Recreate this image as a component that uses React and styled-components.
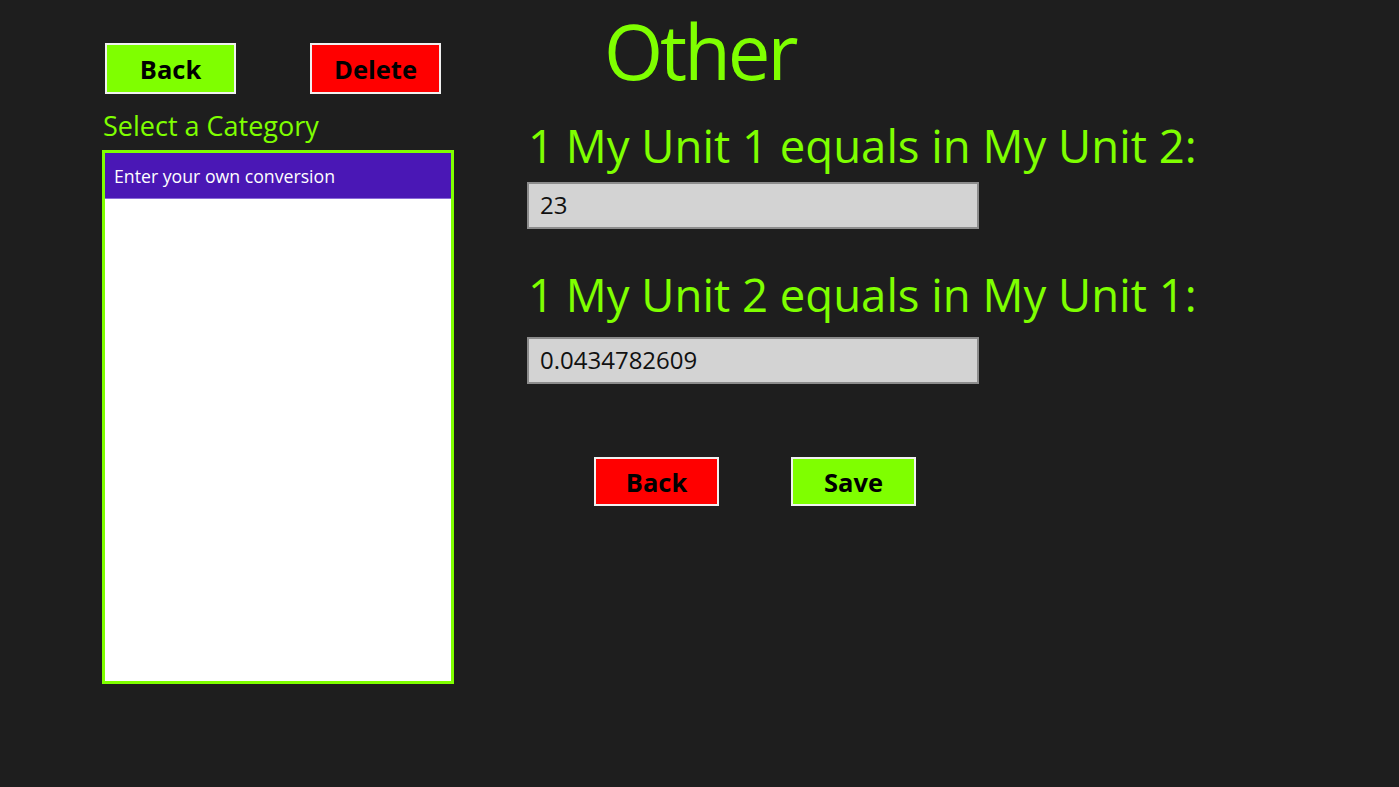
import styled, { createGlobalStyle } from 'styled-components'

const GlobalStyle = createGlobalStyle`
  html, body {
    margin: 0;
    padding: 0;
    background: #1e1e1e;
  }
  body {
    font-family: "Open Sans", "Noto Sans", sans-serif;
  }
`

const Page = styled.div`
  width: 1399px;
  height: 787px;
  background: #1e1e1e;
  display: flex;
  overflow: hidden;
`

const LeftColumn = styled.div`
  width: 352px;
  margin-left: 102px;
  padding-top: 43px;
  display: flex;
  flex-direction: column;
`

const TopButtons = styled.div`
  display: flex;
  gap: 74px;
  padding-left: 3px;
`

const ActionButton = styled.button`
  width: ${p => p.$w || 131}px;
  height: ${p => p.$h || 51}px;
  background: ${p => (p.$danger ? '#ff0000' : '#7fff00')};
  border: 2px solid #f0f0f0;
  color: #000;
  font-family: "Open Sans", sans-serif;
  font-weight: 700;
  font-size: 25.5px;
  line-height: 1;
  padding: 2px 0 0;
  cursor: pointer;
`

const Label = styled.div`
  margin-top: 18px;
  padding-left: 1px;
  color: #7fff00;
  font-size: 27px;
  line-height: 28px;
`

const CategoryList = styled.div`
  margin-top: 10px;
  height: 534px;
  box-sizing: border-box;
  border: 3px solid #7fff00;
  background: #fff;
`

const CategoryItem = styled.div`
  height: 46px;
  box-sizing: border-box;
  padding-left: 9px;
  display: flex;
  align-items: center;
  background: ${p => (p.$selected ? '#4a17b5' : 'transparent')};
  color: ${p => (p.$selected ? '#fff' : '#000')};
  font-size: 17.7px;
  border-bottom: 1px solid #8a6ad8;
`

const RightColumn = styled.div`
  margin-left: 73px;
  padding-top: 8px;
  display: flex;
  flex-direction: column;
`

const Title = styled.h1`
  margin: 0;
  padding-left: 77px;
  color: #7fff00;
  font-weight: 400;
  font-size: 76px;
  line-height: 86px;
  letter-spacing: -3px;
`

const Heading = styled.div`
  margin-top: ${p => p.$top}px;
  padding-left: 1px;
  color: #7fff00;
  font-size: 45.5px;
  line-height: 46px;
  white-space: nowrap;
`

const ValueInput = styled.input`
  margin-top: ${p => p.$top}px;
  width: 452px;
  height: 47px;
  box-sizing: border-box;
  background: #d3d3d3;
  border: 2px solid #8c8c8c;
  padding: 0 0 2px 11px;
  font-family: "Open Sans", sans-serif;
  font-size: 24px;
  color: #111;
  outline: none;
`

const BottomButtons = styled.div`
  margin-top: 73px;
  margin-left: 67px;
  display: flex;
  gap: 72px;
`

const App = () => {
  return (
    <>
      <GlobalStyle />
      <Page>
        <LeftColumn>
          <TopButtons>
            <ActionButton>Back</ActionButton>
            <ActionButton $danger>Delete</ActionButton>
          </TopButtons>
          <Label>Select a Category</Label>
          <CategoryList>
            <CategoryItem $selected>Enter your own conversion</CategoryItem>
          </CategoryList>
        </LeftColumn>
        <RightColumn>
          <Title>Other</Title>
          <Heading $top={28}>1 My Unit 1 equals in My Unit 2:</Heading>
          <ValueInput $top={14} defaultValue="23" />
          <Heading $top={42}>1 My Unit 2 equals in My Unit 1:</Heading>
          <ValueInput $top={20} defaultValue="0.0434782609" />
          <BottomButtons>
            <ActionButton $danger $w={125} $h={49}>Back</ActionButton>
            <ActionButton $w={125} $h={49}>Save</ActionButton>
          </BottomButtons>
        </RightColumn>
      </Page>
    </>
  )
}

export default App
